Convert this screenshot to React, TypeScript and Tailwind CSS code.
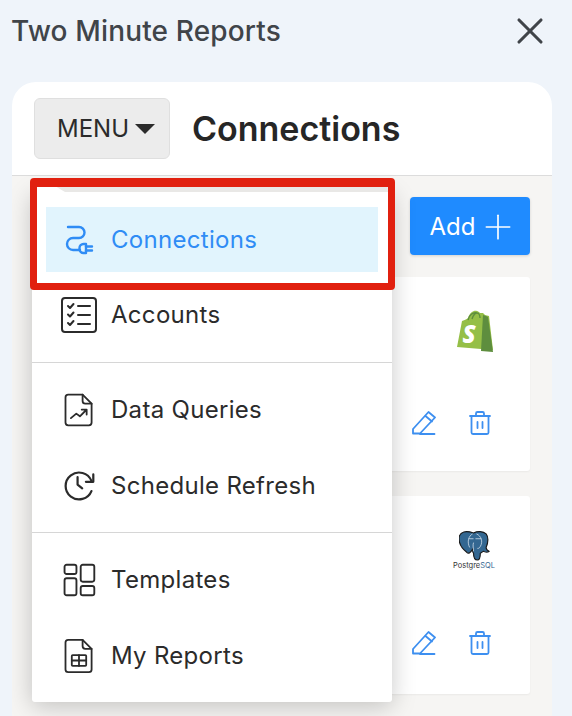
import React from "react";
import { X, Plus } from "lucide-react";

const PlugIcon = () => (
  <svg viewBox="0 0 30 30" className="w-[30px] h-[30px] shrink-0" fill="none" stroke="currentColor" strokeWidth="2.400" strokeLinecap="round" strokeLinejoin="round">
    <path d="M3 2h11a5.500 5.500 0 0 1 0 11H8a6 6 0 0 0 0 12h7" />
    <path d="M21 19h-2.500a4 4 0 0 0-4 4v1a4 4 0 0 0 4 4H21z" />
    <path d="M21 21.500h6M21 25.500h6" />
  </svg>
);

const ChecklistIcon = () => (
  <svg viewBox="0 0 40 40" className="w-10 h-10 shrink-0" fill="none" stroke="currentColor" strokeWidth="2" strokeLinecap="round" strokeLinejoin="round">
    <rect x="3" y="3" width="34" height="34" rx="3" />
    <path d="M9 11l2 2 3.500-4M9 19.500l2 2 3.500-4M9 28l2 2 3.500-4" />
    <path d="M19 11h12M19 20h12M19 29h12" />
  </svg>
);

const FileChartIcon = () => (
  <svg viewBox="0 0 40 40" className="w-9 h-9 shrink-0" fill="none" stroke="currentColor" strokeWidth="2" strokeLinecap="round" strokeLinejoin="round">
    <path d="M8 3h16l10 10v21a3 3 0 0 1-3 3H8a3 3 0 0 1-3-3V6a3 3 0 0 1 3-3z" />
    <path d="M24 3v7a3 3 0 0 0 3 3h7" />
    <path d="M11 29l6-5 4 3 7-7M23 19.500h5.500V25" />
  </svg>
);

const ClockRefreshIcon = () => (
  <svg viewBox="0 0 40 40" className="w-[37px] h-[37px] shrink-0 -ml-[1px]" fill="none" stroke="currentColor" strokeWidth="2.400" strokeLinecap="round" strokeLinejoin="round">
    <path d="M34 15A14.500 14.500 0 1 0 34 26" />
    <path d="M36 8v8h-8" />
    <path d="M19 11v8l5 4" />
  </svg>
);

const TemplatesIcon = () => (
  <svg viewBox="0 0 40 40" className="w-[34px] h-[34px] shrink-0" fill="none" stroke="currentColor" strokeWidth="2.200">
    <rect x="3" y="2" width="14" height="11" rx="2.500" />
    <rect x="3" y="18" width="14" height="20" rx="2.500" />
    <rect x="22" y="2" width="16" height="20" rx="2.500" />
    <rect x="22" y="27" width="16" height="11" rx="2.500" />
  </svg>
);

const FileTableIcon = () => (
  <svg viewBox="0 0 40 40" className="w-9 h-9 shrink-0" fill="none" stroke="currentColor" strokeWidth="2" strokeLinecap="round" strokeLinejoin="round">
    <path d="M8 2h16l10 10v23a3 3 0 0 1-3 3H8a3 3 0 0 1-3-3V5a3 3 0 0 1 3-3z" />
    <path d="M24 2v7a3 3 0 0 0 3 3h7" />
    <rect x="12" y="19" width="16" height="12" rx="1" />
    <path d="M12 25h16M20 19v12" />
  </svg>
);

const PencilIcon = () => (
  <svg viewBox="0 0 24 24" className="w-6 h-6" fill="none" stroke="currentColor" strokeWidth="1.800" strokeLinecap="round" strokeLinejoin="round">
    <path d="M1 23v-4.500L16.500 1.500l6.500 5.500L8 23z" transform="translate(0 -.5)" />
    <path d="M13.500 5l6.500 5.500M8 23h14.500" />
  </svg>
);

const TrashIcon = () => (
  <svg viewBox="0 0 22 24" className="w-[22px] h-6" fill="none" stroke="currentColor" strokeWidth="1.800" strokeLinecap="round" strokeLinejoin="round">
    <path d="M1 5h20M7 5V2.500A1.500 1.500 0 0 1 8.500 1h5A1.500 1.500 0 0 1 15 2.500V5" />
    <path d="M2.500 5v16.500A1.500 1.500 0 0 0 4 23h14a1.500 1.500 0 0 0 1.500-1.500V5" />
    <path d="M8.500 11v6M13.500 11v6" />
  </svg>
);

const ShopifyLogo = () => (
  <svg viewBox="0 0 38 43" className="w-[38px] h-[43px] ml-[2px]">
    <path d="M1 37 6 11c3-1 5-2 6-3 2-6 6-8 9-7 1 0 2 1 3 2h3l2 2 4 1 4 34-36-3z" fill="#95bf47" />
    <path d="M27 5l3 1 2 1 5 35-12-1z" fill="#5e8e3e" />
    <path d="M12 10c1-5 5-8 9-7M16 9c1-3 3-6 5-6 2 0 3 3 3 5" fill="none" stroke="#5e8e3e" strokeWidth="1.400" />
    <text x="13" y="33" fill="#ffffff" fontFamily="'Open Sans', sans-serif" fontSize="24" fontWeight="800" fontStyle="italic" textAnchor="middle">S</text>
  </svg>
);

const PostgresLogo = () => (
  <div className="flex flex-col items-center w-[42px] ml-[1px]">
    <svg viewBox="0 0 32 31" className="w-[31px] h-[30px] mt-[1px]">
      <path d="M5 1c4-1 7 0 10 1 4-2 10-2 13 1 3 4 2 9 0 14 0 2 1 3 3 4-1 1-4 1-6 0l-3 2c0 3 0 7-3 7s-4-3-4-7c-1-1-1-3-1-4-2 3-4 5-6 3-4-3-8-8-8-14C0 4 2 2 5 1z" fill="#336791" stroke="#1a1a1a" strokeWidth="1.200" />
      <path d="M14 3c-4 2-6 8-3 14M18 3c5 2 7 8 4 13-1 2-2 2-3 2M15 12c-1 3 0 6 0 9M10 8h5M17 8h6" fill="none" stroke="#d6e3ee" strokeWidth=".8" />
    </svg>
    <span className="text-[7.500px] leading-[9px] text-[#333333] whitespace-nowrap">
      Postgre<span className="text-[#336791]">SQL</span>
    </span>
  </div>
);

const MenuItem = ({ icon, label, active = false, nudge = false }: { icon: React.ReactNode; label: string; active?: boolean; nudge?: boolean }) => (
  <div className={`h-[75px] flex items-center ${active ? "px-[14px] py-[5px] text-[#2f8cf5]" : "pl-[27px] text-[#2b2b2b]"} ${nudge ? "pt-[2px]" : ""}`}>
    {active ? (
      <div className="w-full h-full bg-[#e1f4fd] flex items-center gap-[11px] pl-[14px]">
        <span className="w-10 flex justify-center">{icon}</span>
        <span className="text-[24px] tracking-[0.3px]">{label}</span>
      </div>
    ) : (
      <div className="flex items-center gap-[12px]">
        <span className="w-10 flex justify-center">{icon}</span>
        <span className="text-[24px] tracking-[0.3px]">{label}</span>
      </div>
    )}
  </div>
);

const ConnectionCard = ({ logo, height, actionsTop }: { logo: React.ReactNode; height: string; actionsTop: string }) => (
  <div className={`${height} bg-white rounded-[3px] shadow-[0_1px_2px_rgba(0,0,0,0.05)] flex flex-col items-end pr-[34px] text-[#3d8ff0]`}>
    <div className="h-[108px] w-[45px] flex items-center justify-center">{logo}</div>
    <div className={`${actionsTop} flex items-center gap-[33px] pr-[5px]`}>
      <PencilIcon />
      <TrashIcon />
    </div>
  </div>
);

export default function App() {
  return (
    <div className="w-[572px] h-[716px] overflow-hidden bg-[#eff4fa] flex flex-col font-['Inter',sans-serif]">
      <header className="h-[82px] shrink-0 pl-[11px] pr-[20px] pt-[11px] flex items-start justify-between">
        <h1 className="text-[28px] leading-[40px] font-medium tracking-[0.15px] text-[#404449]">Two Minute Reports</h1>
        <X className="w-11 h-11 -mt-[2px] text-[#404449]" strokeWidth={1.7} />
      </header>

      <main className="ml-3 mr-5 flex-1 flex flex-col min-h-0 rounded-t-[24px] overflow-hidden bg-white">
        <div className="h-[94px] shrink-0 border-b border-[#dcdcdc] flex items-center pl-[22px] gap-[22px]">
          <button className="w-[136px] h-[61px] pl-2 rounded-[6px] bg-[#ececec] border border-[#dfdfdf] flex items-center justify-center gap-[6px] text-[24px] text-[#2b2b2b]">
            MENU
            <span className="w-0 h-0 border-x-[10px] border-x-transparent border-t-[10px] border-t-[#2b2b2b]" />
          </button>
          <h2 className="text-[34px] font-semibold text-[#262626]">Connections</h2>
        </div>

        <div className="relative flex-1 min-h-0 bg-[#f6f5f3] px-[22px] pt-[21px]">
          <div className="flex justify-end">
            <button className="w-[120px] h-[58px] pt-[1px] rounded-[4px] bg-[#1f8bff] shadow-[0_1px_3px_rgba(0,0,0,0.15)] text-white text-[24px] flex items-center justify-center gap-[11px]">
              Add
              <Plus className="w-10 h-10 -mx-2" strokeWidth={1} />
            </button>
          </div>
          <div className="mt-[22px] flex flex-col gap-[25px]">
            <ConnectionCard logo={<ShopifyLogo />} height="h-[194px]" actionsTop="mt-[26px]" />
            <ConnectionCard logo={<PostgresLogo />} height="h-[198px]" actionsTop="mt-[27px]" />
          </div>

          {/* dropdown */}
          <div className="absolute left-[20px] top-[16px] w-[360px] bg-white rounded-b-[3px] shadow-[0_4px_24px_rgba(0,0,0,0.22)] py-[10px]">
            <MenuItem icon={<PlugIcon />} label="Connections" active />
            <MenuItem icon={<ChecklistIcon />} label="Accounts" />
            <div className="mt-[10px] mb-[9px] border-t border-[#d6d6d6]" />
            <MenuItem icon={<FileChartIcon />} label="Data Queries" />
            <MenuItem icon={<ClockRefreshIcon />} label="Schedule Refresh" nudge />
            <div className="mt-[10px] mb-[9px] border-t border-[#d6d6d6]" />
            <MenuItem icon={<TemplatesIcon />} label="Templates" />
            <MenuItem icon={<FileTableIcon />} label="My Reports" nudge />
          </div>

          {/* strip above the menu, inside the red box */}
          <div className="absolute left-[25px] top-[11px] w-[350px] h-[5px] bg-[#e9e8e6]">
            <div className="w-[28px] h-full bg-white [clip-path:polygon(0_0,70%_0,100%_100%,0_100%)]" />
          </div>

          {/* red highlight box */}
          <div className="absolute left-[18px] top-[2px] w-[365px] h-[112px] rounded-[4px] border-[7px] border-t-[9px] border-[#e1200f] pointer-events-none" />
        </div>
      </main>
    </div>
  );
}
